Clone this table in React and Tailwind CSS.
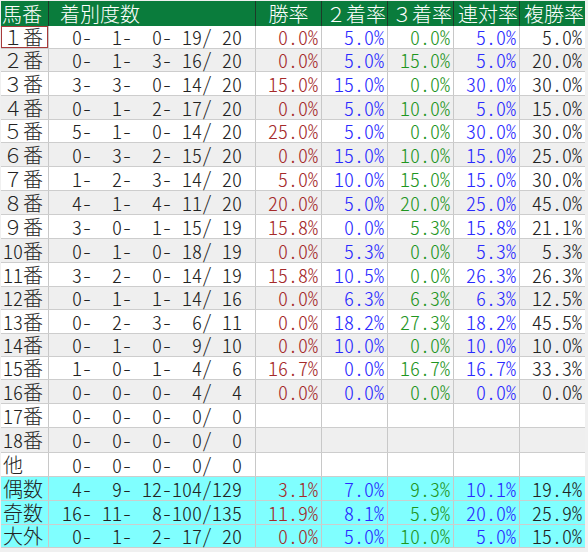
import React from "react";

const COLS = "grid grid-cols-[48px_207px_66px_66px_66px_66px_65px]";
const HW = "[font-feature-settings:'hwid']";

// 馬番, 着別度数(1着,2着,3着,着外,計), 勝率, 2着率, 3着率, 連対率, 複勝率
const rows = [
  ["１番", "0", "1", "0", "19", "20", "0.0%", "5.0%", "0.0%", "5.0%", "5.0%"],
  ["２番", "0", "1", "3", "16", "20", "0.0%", "5.0%", "15.0%", "5.0%", "20.0%"],
  ["３番", "3", "3", "0", "14", "20", "15.0%", "15.0%", "0.0%", "30.0%", "30.0%"],
  ["４番", "0", "1", "2", "17", "20", "0.0%", "5.0%", "10.0%", "5.0%", "15.0%"],
  ["５番", "5", "1", "0", "14", "20", "25.0%", "5.0%", "0.0%", "30.0%", "30.0%"],
  ["６番", "0", "3", "2", "15", "20", "0.0%", "15.0%", "10.0%", "15.0%", "25.0%"],
  ["７番", "1", "2", "3", "14", "20", "5.0%", "10.0%", "15.0%", "15.0%", "30.0%"],
  ["８番", "4", "1", "4", "11", "20", "20.0%", "5.0%", "20.0%", "25.0%", "45.0%"],
  ["９番", "3", "0", "1", "15", "19", "15.8%", "0.0%", "5.3%", "15.8%", "21.1%"],
  ["10番", "0", "1", "0", "18", "19", "0.0%", "5.3%", "0.0%", "5.3%", "5.3%"],
  ["11番", "3", "2", "0", "14", "19", "15.8%", "10.5%", "0.0%", "26.3%", "26.3%"],
  ["12番", "0", "1", "1", "14", "16", "0.0%", "6.3%", "6.3%", "6.3%", "12.5%"],
  ["13番", "0", "2", "3", "6", "11", "0.0%", "18.2%", "27.3%", "18.2%", "45.5%"],
  ["14番", "0", "1", "0", "9", "10", "0.0%", "10.0%", "0.0%", "10.0%", "10.0%"],
  ["15番", "1", "0", "1", "4", "6", "16.7%", "0.0%", "16.7%", "16.7%", "33.3%"],
  ["16番", "0", "0", "0", "4", "4", "0.0%", "0.0%", "0.0%", "0.0%", "0.0%"],
  ["17番", "0", "0", "0", "0", "0", "", "", "", "", ""],
  ["18番", "0", "0", "0", "0", "0", "", "", "", "", ""],
  ["他", "0", "0", "0", "0", "0", "", "", "", "", ""],
  ["偶数", "4", "9", "12", "104", "129", "3.1%", "7.0%", "9.3%", "10.1%", "19.4%"],
  ["奇数", "16", "11", "8", "100", "135", "11.9%", "8.1%", "5.9%", "20.0%", "25.9%"],
  ["大外", "0", "1", "2", "17", "20", "0.0%", "5.0%", "10.0%", "5.0%", "15.0%"],
];

const heights = [
  "h-[23px]", "h-[23px]", "h-[24px]", "h-[24px]", "h-[23px]", "h-[24px]",
  "h-[24px]", "h-[24px]", "h-[24px]", "h-[24px]", "h-[24px]", "h-[23px]",
  "h-[24px]", "h-[23px]", "h-[23px]", "h-[24px]", "h-[24px]", "h-[25px]",
  "h-[24px]", "h-[24px]", "h-[24px]", "h-[23px]",
];

const pctColors = [
  "text-[#a52a2a]",
  "text-[#2a2aff]",
  "text-[#1f961f]",
  "text-[#2a2aff]",
  "text-[#222222]",
];

const Header = () => (
  <div className={`${COLS} h-[25px] bg-[#0a7c3c] text-white text-[20px] leading-none`}>
    <div className="flex items-center pl-[1px] border-r border-[#1d3a28]">馬番</div>
    <div className="flex items-center pl-[11px] border-r border-[#1d3a28]">着別度数</div>
    <div className="flex items-center justify-center border-r border-[#1d3a28]">勝率</div>
    <div className="flex items-center justify-end pr-[1px] border-r border-[#1d3a28]">２着率</div>
    <div className="flex items-center justify-end pr-[1px] border-r border-[#1d3a28]">３着率</div>
    <div className="flex items-center justify-end pr-[1px] border-r border-[#1d3a28]">連対率</div>
    <div className="flex items-center justify-end pr-[1px]">複勝率</div>
  </div>
);

const Row = ({ r, i }) => {
  const total = i >= 19;
  const bg = total ? "bg-[#80ffff]" : i % 2 === 0 ? "bg-white" : "bg-[#efefef]";
  const [name, a, b, c, d, n, ...pcts] = r;
  const num = name.match(/^(\d+)(.*)$/);
  return (
    <div className={`${COLS} ${heights[i]} ${bg} border-b border-[#cdcdcd] text-[20px] leading-none text-[#222222]`}>
      {/* 馬番 */}
      <div
        className={`flex items-center pl-[2px] border-r border-[#c8c8c8] ${
          i === 0 ? "shadow-[inset_0_0_0_1px_#a83a3a]" : ""
        }`}>
        {num ? (
          <>
            <span className={HW}>{num[1]}</span>
            {num[2]}
          </>
        ) : (
          name
        )}
      </div>

      {/* 着別度数 */}
      <div className={`flex items-center pl-[3px] border-r border-[#c8c8c8] ${HW}`}>
        <span className="w-[40px] text-right">{a}-</span>
        <span className="w-[40px] text-right">{b}-</span>
        <span className="w-[40px] text-right">{c}-</span>
        <span className="w-[40px] text-right">{d}/</span>
        <span className="w-[30px] text-right">{n}</span>
      </div>

      {/* 率 */}
      {pcts.map((p, k) => (
        <div
          key={k}
          className={`flex items-center justify-end pr-[3px] ${HW} ${pctColors[k]} ${
            k < 4 ? "border-r border-[#c8c8c8]" : ""
          }`}>
          {p}
        </div>
      ))}
    </div>
  );
};

export default function App() {
  return (
    <div className="w-[588px] h-[552px] bg-[#f0f0f0] pt-[1px] pl-[1px] font-['Noto_Sans_CJK_JP',sans-serif] font-light overflow-hidden">
      <div className="w-[584px]">
        <Header />
        {rows.map((r, i) => (
          <Row key={i} r={r} i={i} />
        ))}
      </div>
    </div>
  );
}
